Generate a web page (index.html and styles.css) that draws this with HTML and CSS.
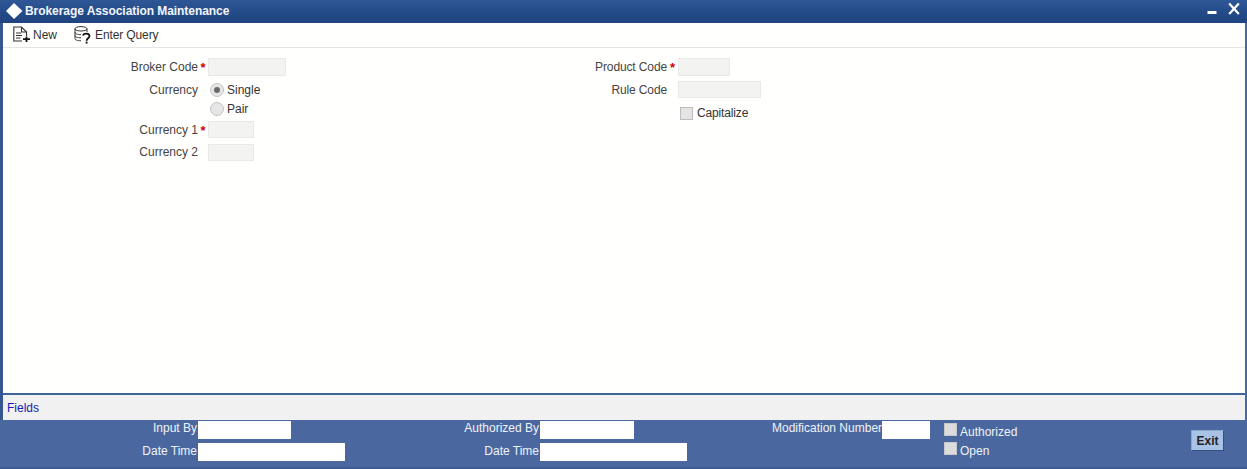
FILE: index.html
```html
<!DOCTYPE html>
<html lang="en">
<head>
<meta charset="utf-8">
<title>Brokerage Association Maintenance</title>
<link rel="stylesheet" href="styles.css">
</head>
<body>
<div class="window">
  <header class="titlebar">
    <svg class="logo" width="17" height="16" viewBox="0 0 17 16"><path d="M8 0 16.5 8 8 16 0 8Z" fill="#fff"/></svg>
    <h1 class="title">Brokerage Association Maintenance</h1>
    <div class="winbtns">
      <svg width="10" height="14" viewBox="0 0 10 14"><rect x="0.5" y="9" width="9" height="3" fill="#fff"/></svg>
      <svg width="12" height="14" viewBox="0 0 12 14"><path d="M1.2 1.5 10.8 12M10.8 1.5 1.2 12" stroke="#fff" stroke-width="2.2" fill="none"/></svg>
    </div>
  </header>
  <nav class="toolbar">
    <span class="tool tool-new">
      <svg width="20" height="18" viewBox="0 0 20 18" fill="none" stroke="#333" stroke-width="1.1"><path d="M9 15H0.8V1H8.5L13.5 6V10"/><path d="M8.5 1V6H13.5"/><path d="M3 7H8M3 9.5H9M3 12H7.5"/><path d="M13.5 10.5V16M10 13.2H17" stroke="#111" stroke-width="1.8"/></svg>
      New
    </span>
    <span class="tool tool-query">
      <svg width="20" height="18" viewBox="0 0 20 18" fill="none" stroke="#333" stroke-width="1"><ellipse cx="7" cy="2.8" rx="6" ry="2.2"/><path d="M1 2.8V12.5C1 14 3.5 14.8 7 14.8"/><path d="M13 2.8V6"/><path d="M1 6.2C1 7.8 3.5 8.6 7 8.6M1 9.6C1 11 3.5 11.8 7 11.8"/><path d="M9 9.5C9.5 6.8 15.5 6.8 15.5 10C15.5 12.3 12.6 12.2 12.6 14.8" stroke="#111" stroke-width="1.8"/><rect x="11.7" y="15.6" width="1.8" height="2" fill="#111" stroke="none"/></svg>
      <span class="qtext">Enter Query</span>
    </span>
  </nav>
  <main class="form">
    <div class="col col-left">
      <div class="row row-broker"><label class="lbl">Broker Code</label><span class="req">*</span><span class="input w78"></span></div>
      <div class="row row-radio1"><label class="lbl">Currency</label><span class="req"></span><span class="radio on"></span><span class="opt">Single</span></div>
      <div class="row row-radio2"><span class="lbl"></span><span class="req"></span><span class="radio"></span><span class="opt">Pair</span></div>
      <div class="row row-cur1"><label class="lbl">Currency 1</label><span class="req">*</span><span class="input w46"></span></div>
      <div class="row row-cur2"><label class="lbl lbl-up">Currency 2</label><span class="req"></span><span class="input w46"></span></div>
    </div>
    <div class="col col-right">
      <div class="row row-broker"><label class="lbl">Product Code</label><span class="req">*</span><span class="input w52"></span></div>
      <div class="row row-rule"><label class="lbl">Rule Code</label><span class="req"></span><span class="input w83"></span></div>
      <div class="row row-cap"><span class="lbl"></span><span class="req"></span><span class="check"></span><span class="cap">Capitalize</span></div>
    </div>
  </main>
  <div class="fields"><a class="fields-link">Fields</a></div>
  <footer class="footer">
    <div class="audit audit-a">
      <div class="aline"><span class="flbl">Input By</span><span class="finput w93"></span></div>
      <div class="aline"><span class="flbl">Date Time</span><span class="finput w147"></span></div>
    </div>
    <div class="audit audit-b">
      <div class="aline"><span class="flbl">Authorized By</span><span class="finput w94"></span></div>
      <div class="aline"><span class="flbl">Date Time</span><span class="finput w147"></span></div>
    </div>
    <div class="mod"><span class="flbl">Modification Number</span><span class="finput w48"></span></div>
    <div class="checks">
      <div class="cline"><span class="fcheck"></span><span class="ctext">Authorized</span></div>
      <div class="cline"><span class="fcheck"></span><span class="ctext">Open</span></div>
    </div>
    <button class="exit" type="button">Exit</button>
  </footer>
</div>
</body>
</html>
```
FILE: styles.css
```css
* { box-sizing: border-box; }
html, body { margin: 0; padding: 0; }
body { font-family: "Liberation Sans", Arial, sans-serif; font-size: 12px; color: #333; background: #fff; }
.window { width: 1247px; height: 469px; display: flex; flex-direction: column; background: #fffffd; border-left: 3px solid #36568f; border-right: 2px solid #48699f; }
.titlebar { height: 23px; margin: 0 -2px 0 -3px; padding-left: 6px; display: flex; align-items: center; background: linear-gradient(#2f5797, #234a87 60%, #1f4480); flex: none; }
.logo { flex: none; margin-top: -2px; }
.title { margin: -1px 0 0 2px; font-size: 12px; line-height: 14px; font-weight: bold; color: #f2f5fa; letter-spacing: -0.06px; }
.winbtns { margin-left: auto; display: flex; gap: 11px; padding-right: 7px; align-items: flex-start; margin-top: -5px; }
.toolbar { height: 25px; flex: none; border-bottom: 1px solid #e6e6e4; display: flex; align-items: center; padding-left: 10px; }
.tool { display: flex; align-items: center; color: #333; }
.tool-query { margin-left: 17px; gap: 1px; }
.qtext { letter-spacing: -0.12px; }
.form { flex: 1; display: flex; border-bottom: 2px solid #3f6497; padding-top: 10px; }
.col-left { width: 465px; }
.col-right { flex: 1; }
.col-left .lbl { width: 195px; }
.col-right .lbl { width: 199px; letter-spacing: -0.12px; }
.col-right .req { width: 11px; }
.row { display: flex; align-items: center; }
.lbl { text-align: right; color: #444; flex: none; }
.lbl-up { margin-top: -1px; }
.req { width: 10px; flex: none; color: #c00; font-weight: bold; text-align: center; font-size: 13px; line-height: 14px; padding-top: 2px; }
.input { height: 100%; background: #f3f3f1; border: 1px solid #e9e9e7; display: block; }
.w78 { width: 78px; } .w46 { width: 46px; } .w52 { width: 52px; } .w83 { width: 83px; }
.row-broker { height: 18px; }
.row-radio1 { height: 18px; margin-top: 5px; }
.row-radio2 { height: 18px; margin-top: 1px; }
.row-cur1 { height: 17px; margin-top: 3px; }
.row-cur2 { height: 17px; margin-top: 6px; }
.row-rule { height: 17px; margin-top: 5px; }
.row-cap { height: 16px; margin-top: 7px; }
.radio { width: 14px; height: 14px; margin-left: 2px; border-radius: 50%; background: #e6e6e6; border: 1px solid #c4c4c4; flex: none; position: relative; }
.radio.on::after { content: ""; position: absolute; left: 3px; top: 3px; width: 6px; height: 6px; border-radius: 50%; background: #6a6a6a; }
.opt { margin-left: 3px; color: #333; }
.check { width: 13px; height: 13px; margin-left: 2px; background: #e4e4e4; border: 1px solid #bdbdbd; flex: none; }
.cap { margin-left: 4px; color: #333; letter-spacing: -0.15px; }
.fields { height: 25px; flex: none; background: #f1f1f1; display: flex; align-items: center; padding-left: 4px; }
.fields-link { color: #1a1ab0; }
.footer { height: 49px; flex: none; margin: 0 -2px 0 -3px; background: #4a689f; border-bottom: 2px solid #3f5c92; display: flex; position: relative; }
.audit { flex: none; display: flex; flex-direction: column; }
.audit-a, .audit-b { width: 342px; }
.aline { display: flex; height: 22px; width: 100%; padding-top: 1px; }
.aline .flbl { width: 198px; }
.aline:first-child .flbl { margin-top: -1px; }
.flbl { color: #f0f3f8; text-align: right; line-height: 16px; flex: none; padding-right: 1px; white-space: nowrap; }
.finput { height: 18px; background: #fff; display: block; flex: none; }
.w93 { width: 93px; } .w94 { width: 94px; } .w147 { width: 147px; } .w48 { width: 48px; }
.mod { display: flex; padding-top: 1px; margin-left: 88px; width: 172px; align-items: flex-start; flex: none; }
.mod .flbl { width: 110px; margin-top: -1px; }
.checks { flex: none; padding-top: 3px; display: flex; flex-direction: column; gap: 6px; }
.cline { display: flex; height: 13px; color: #f0f3f8; }
.fcheck { width: 13px; height: 13px; background: #dcdcdc; border: 1px solid #c8c8c8; flex: none; }
.ctext { margin-left: 3px; line-height: 16px; margin-top: 1px; }
.exit { position: absolute; left: 1191px; top: 10px; width: 33px; height: 21px; padding: 0; background: #a9c3e6; border: 1px solid #8fa9cd; border-bottom-color: #35507f; border-right-color: #35507f; font: bold 12px "Liberation Sans", Arial, sans-serif; color: #222; }
```
